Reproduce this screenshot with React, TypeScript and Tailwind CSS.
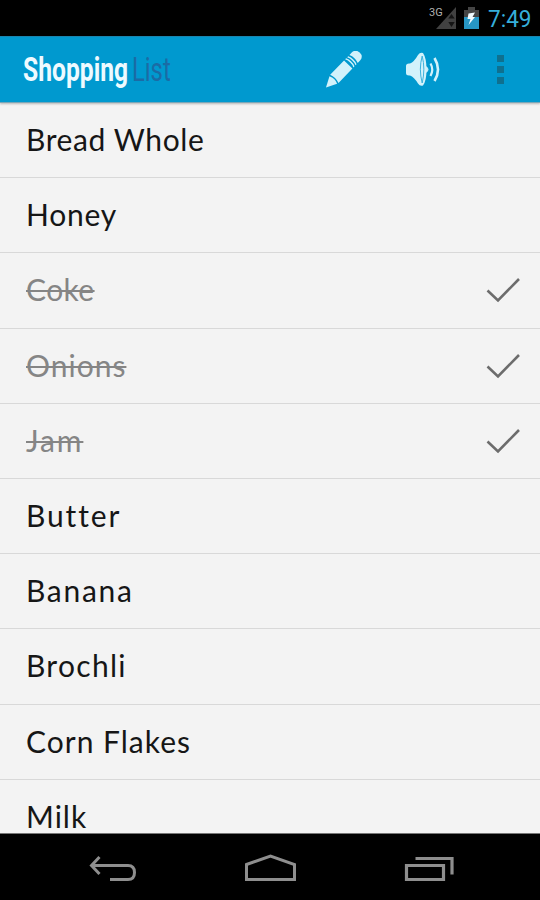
import clsx from "clsx";

interface IShoppingItem {
  name: string;
  tracking: string;
  done?: boolean;
}

const items: IShoppingItem[] = [
  { name: "Bread Whole", tracking: "tracking-[0.6px]" },
  { name: "Honey", tracking: "tracking-[0.8px]" },
  { name: "Coke", tracking: "tracking-[0.4px]", done: true },
  { name: "Onions", tracking: "tracking-[1px]", done: true },
  { name: "Jam", tracking: "tracking-[1.9px]", done: true },
  { name: "Butter", tracking: "tracking-[1.9px]" },
  { name: "Banana", tracking: "tracking-[1.7px]" },
  { name: "Brochli", tracking: "tracking-[1.3px]" },
  { name: "Corn Flakes", tracking: "tracking-[1px]" },
  { name: "Milk", tracking: "tracking-[1px]" },
];

const StatusBar = () => (
  <div className="flex h-[36px] flex-none items-start bg-black">
    <span className="ml-[429px] mt-[7px] w-[15px] font-['Roboto',sans-serif] text-[11px] leading-[12px] text-[#b0b0b0]">
      3G
    </span>
    {/* Signal */}
    <svg className="-ml-[8px] mt-[7px] flex-none" width="20" height="22" viewBox="0 0 20 22">
      <path d="M20 0V22H0Z" fill="#414141" />
      <path d="M15.5 7l3.2 4.5h-6.4zM15.5 20l-3.2-5h6.4z" fill="#151515" />
    </svg>
    {/* Battery */}
    <svg className="ml-[8px] mt-[7px] flex-none" width="15" height="22" viewBox="0 0 15 22">
      <path d="M0 3H4V0H11V3H15V10H0Z" fill="#454545" />
      <path d="M0 10H15V22H0Z" fill="#2796c4" />
      <path d="M4.5 6.5L11 5.5L8.5 10H11L4.5 18L6.5 12H3.5Z" fill="#f2fbff" />
    </svg>
    <span className="ml-[9px] mt-[5px] origin-left scale-x-[0.94] font-['Roboto',sans-serif] text-[24px] leading-[28px] text-[#35aedb]">
      7:49
    </span>
  </div>
);

const ActionBar = () => (
  <header className="relative z-10 flex h-[67px] flex-none items-start border-t border-b border-t-[#1a84ae] border-b-[#7aa7b8] bg-[#0099cf] shadow-[0_1px_2px_rgba(0,0,0,0.25)]">
    <h1 className="ml-[23px] mt-[12px] flex w-[303px] font-['Roboto',sans-serif] text-[34px] leading-[40px]">
      <span className="w-[109px] origin-left scale-x-[0.725] font-bold text-[#eefaff]">Shopping</span>
      <span className="origin-left scale-x-[0.7] text-[#1b6ba5]">List</span>
    </h1>
    {/* Edit */}
    <svg className="mt-[14px] flex-none" width="36" height="37" viewBox="0 0 36 37">
      <g transform="translate(0 36.5) rotate(-46)" fill="#d2f2fb">
        <path d="M0 0L10.5-5.3Q13 0 10.500 5.300Z" />
        <path d="M12-5.800H32V5.800H12Q14 0 12-5.800Z" />
        <path d="M33.500-5.800Q36 0 33.500 5.800H35Q37.500 0 35-5.800Z" />
        <path d="M36.500-5.800Q39 0 36.500 5.800H38Q40.500 0 38-5.800Z" />
        <path d="M39.700-5.800H43Q48.500-5.500 48.500 0T43 5.800H39.700Q42.200 0 39.700-5.800Z" />
      </g>
    </svg>
    {/* Read aloud */}
    <svg className="ml-[44px] mt-[15px] flex-none" width="34" height="36" viewBox="0 0 34 36" fill="none" stroke="#d2f2fb">
      <path
        d="M0 14Q0 11.500 3 11.500H4Q8 10 12 3Q14 0 17 1Q20.500 6 20.500 17.500Q20.500 29 17 33.500Q14 34.500 12 31.500Q8 25 4 23.500H3Q0 23.500 0 21Z"
        fill="#d2f2fb"
        stroke="none"
      />
      <path d="M16.200 4Q12.500 17 16.200 31Q19.500 17 16.200 4Z" stroke="#3db1dc" strokeWidth="1" />
      <path d="M20 14.500Q24 17.500 20 20.500Z" fill="#d2f2fb" />
      <path d="M24.500 11.500Q28 17.500 24.500 24" strokeWidth="2.200" />
      <path d="M28.500 6Q35.500 17.500 28.500 29" strokeWidth="2.600" />
    </svg>
    {/* Overflow */}
    <div className="ml-[57px] mt-[18px] flex flex-col gap-[4px]">
      <span className="size-[7px] bg-[#0f708f]" />
      <span className="size-[7px] bg-[#0f708f]" />
      <span className="size-[7px] bg-[#0f708f]" />
    </div>
  </header>
);

const ItemRow = ({ name, tracking, done }: IShoppingItem) => (
  <li className="flex h-[75.2px] flex-none items-center justify-between border-b border-[#d8d8d8] pr-5 pl-[26px]">
    <span
      className={clsx(
        "pb-[2px] font-['Lato',sans-serif] text-[30px] leading-[36px] whitespace-nowrap",
        tracking,
        done ? "text-[#858585] line-through decoration-2" : "text-[#161616]",
      )}
    >
      {name}
    </span>
    {done && (
      <svg width="34" height="26" viewBox="0 0 34 26" fill="none" stroke="#6c6c6c" strokeWidth="2.600">
        <path d="M1.500 13.500L12 23.500L33 2" />
      </svg>
    )}
  </li>
);

const NavBar = () => (
  <nav className="flex h-[67px] flex-none items-start border-t border-[#777] bg-black pt-[20px]">
    <svg className="ml-[89px]" width="48" height="29" viewBox="0 0 48 29" fill="none" stroke="#8e8e8e" strokeWidth="3">
      <path d="M10.500 3L2.500 11.500L10.500 20M3 11.500H39Q45.500 11.500 45.500 18.500T39 25.500H21" />
    </svg>
    <svg className="ml-[107px]" width="54" height="29" viewBox="0 0 54 29" fill="none" stroke="#8e8e8e" strokeWidth="3">
      <path d="M2.500 10.500L26.500 2L50.500 10.500V25.500H2.500Z" />
    </svg>
    <svg className="ml-[106px]" width="52" height="29" viewBox="0 0 52 29" fill="none" stroke="#8e8e8e" strokeWidth="3.200">
      <path d="M2.500 11.500H39.500V25.500H2.500ZM11.500 4.500H48V20.500" />
    </svg>
  </nav>
);

export default function App() {
  return (
    <div className="flex h-[900px] w-[540px] flex-col overflow-hidden bg-[#f3f3f3]">
      <StatusBar />
      <ActionBar />
      <ul className="flex h-[730px] flex-none flex-col overflow-hidden">
        {items.map((item) => (
          <ItemRow key={item.name} {...item} />
        ))}
      </ul>
      <NavBar />
    </div>
  );
}
